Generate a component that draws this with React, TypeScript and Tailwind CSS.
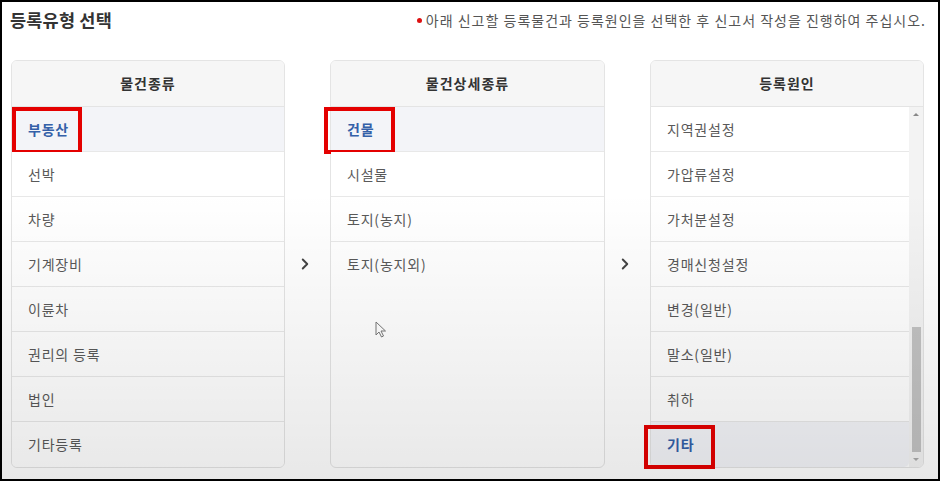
import React from 'react';
import { ChevronRight } from 'lucide-react';

const kinds = ['부동산', '선박', '차량', '기계장비', '이륜차', '권리의 등록', '법인', '기타등록'];
const details = ['건물', '시설물', '토지(농지)', '토지(농지외)'];
const causes = ['지역권설정', '가압류설정', '가처분설정', '경매신청설정', '변경(일반)', '말소(일반)', '취하', '기타'];

function Row({ label, selected, marked, markClass }: { label: string; selected?: boolean; marked?: boolean; markClass?: string }) {
    return (
        <div
            className={
                'relative h-[45px] shrink-0 flex items-center pl-4 border-b border-[#e8e8e8] last:border-b-0 last:rounded-b-[5px] text-[14px] tracking-[0.8px] ' +
                (selected ? 'bg-[#f3f4f8] text-[#3460a8] font-semibold' : 'bg-white text-[#595959]')
            }
        >
            {label}
            {marked && <div className={'absolute border-[4px] border-[#e40000] ' + markClass} />}
        </div>
    );
}

function Column({ title, children, width }: { title: string; children: React.ReactNode; width: string }) {
    return (
        <div className={'flex flex-col h-[408px] rounded-md border border-[#e4e4e4] bg-white ' + width}>
            <div className="h-[46px] shrink-0 flex items-center justify-center bg-[#f6f6f6] border-b border-[#e4e4e4] rounded-t-[5px] text-[14px] font-bold text-[#333] tracking-[1px]">
                {title}
            </div>
            {children}
        </div>
    );
}

function Arrow() {
    return (
        <div className="w-[45px] flex items-center justify-center pr-[6px] text-[#444]">
            <ChevronRight size={18} strokeWidth={2.6} />
        </div>
    );
}

export default function App() {
    return (
        <div
            className="relative w-[940px] h-[481px] overflow-hidden border-2 border-black bg-white"
            style={{ fontFamily: '"Noto Sans CJK KR", "Noto Sans", sans-serif' }}
        >
            <div className="flex items-center justify-between pl-[8px] pr-[12px] pt-[6px] h-[30px]">
                <div className="text-[17.5px] font-bold text-[#333] tracking-[0.2px]">등록유형 선택</div>
                <div className="flex items-center text-[14px] text-[#555] tracking-[1px]">
                    <span className="w-[5px] h-[5px] rounded-full bg-[#d11] mr-[4px]" />
                    아래 신고할 등록물건과 등록원인을 선택한 후 신고서 작성을 진행하여 주십시오.
                </div>
            </div>

            <div className="flex pl-[9px] pt-[28px]">
                <Column title="물건종류" width="w-[274px]">
                    {kinds.map((k, i) => (
                        <Row key={k} label={k} selected={i === 0} marked={i === 0} markClass="left-[0px] top-[0px] w-[70px] h-[47px]" />
                    ))}
                </Column>
                <Arrow />
                <Column title="물건상세종류" width="w-[275px]">
                    <div className="flex flex-col">
                        {details.map((d, i) => (
                            <Row key={d} label={d} selected={i === 0} marked={i === 0} markClass="left-[-7px] top-[0px] w-[71px] h-[47px]" />
                        ))}
                    </div>
                </Column>
                <Arrow />
                <Column title="등록원인" width="w-[274px]">
                    <div className="flex flex-1 min-h-0">
                        <div className="flex-1 flex flex-col">
                            {causes.map((c, i) => (
                                <Row key={c} label={c} selected={i === 7} marked={i === 7} markClass="left-[-7px] top-[3px] w-[71px] h-[44px]" />
                            ))}
                        </div>
                        <div className="w-[14px] flex flex-col items-center bg-[#f3f3f3] rounded-br-[5px]">
                            <div className="h-[14px] flex items-center justify-center">
                                <div className="w-0 h-0 border-x-[3px] border-x-transparent border-b-[3px] border-b-[#888]" />
                            </div>
                            <div className="flex-1" />
                            <div className="w-[9px] h-[125px] bg-[#c2c2c2]" />
                            <div className="h-[15px] flex items-center justify-center">
                                <div className="w-0 h-0 border-x-[3px] border-x-transparent border-t-[3px] border-t-[#aaa]" />
                            </div>
                        </div>
                    </div>
                </Column>
            </div>

            {/* mouse cursor */}
            <svg className="absolute left-[373px] top-[319px]" width="12" height="17" viewBox="0 0 12 17">
                <path d="M1 1 L1 14 L4 11 L6.5 16 L8.5 15 L6 10 L10.5 10 Z" fill="#fff" stroke="#777" strokeWidth="1" strokeLinejoin="round" />
            </svg>

            {/* video haze toward bottom */}
            <div className="pointer-events-none absolute inset-0 bg-gradient-to-b from-transparent via-transparent via-40% to-black/[0.09]" />
        </div>
    );
}
